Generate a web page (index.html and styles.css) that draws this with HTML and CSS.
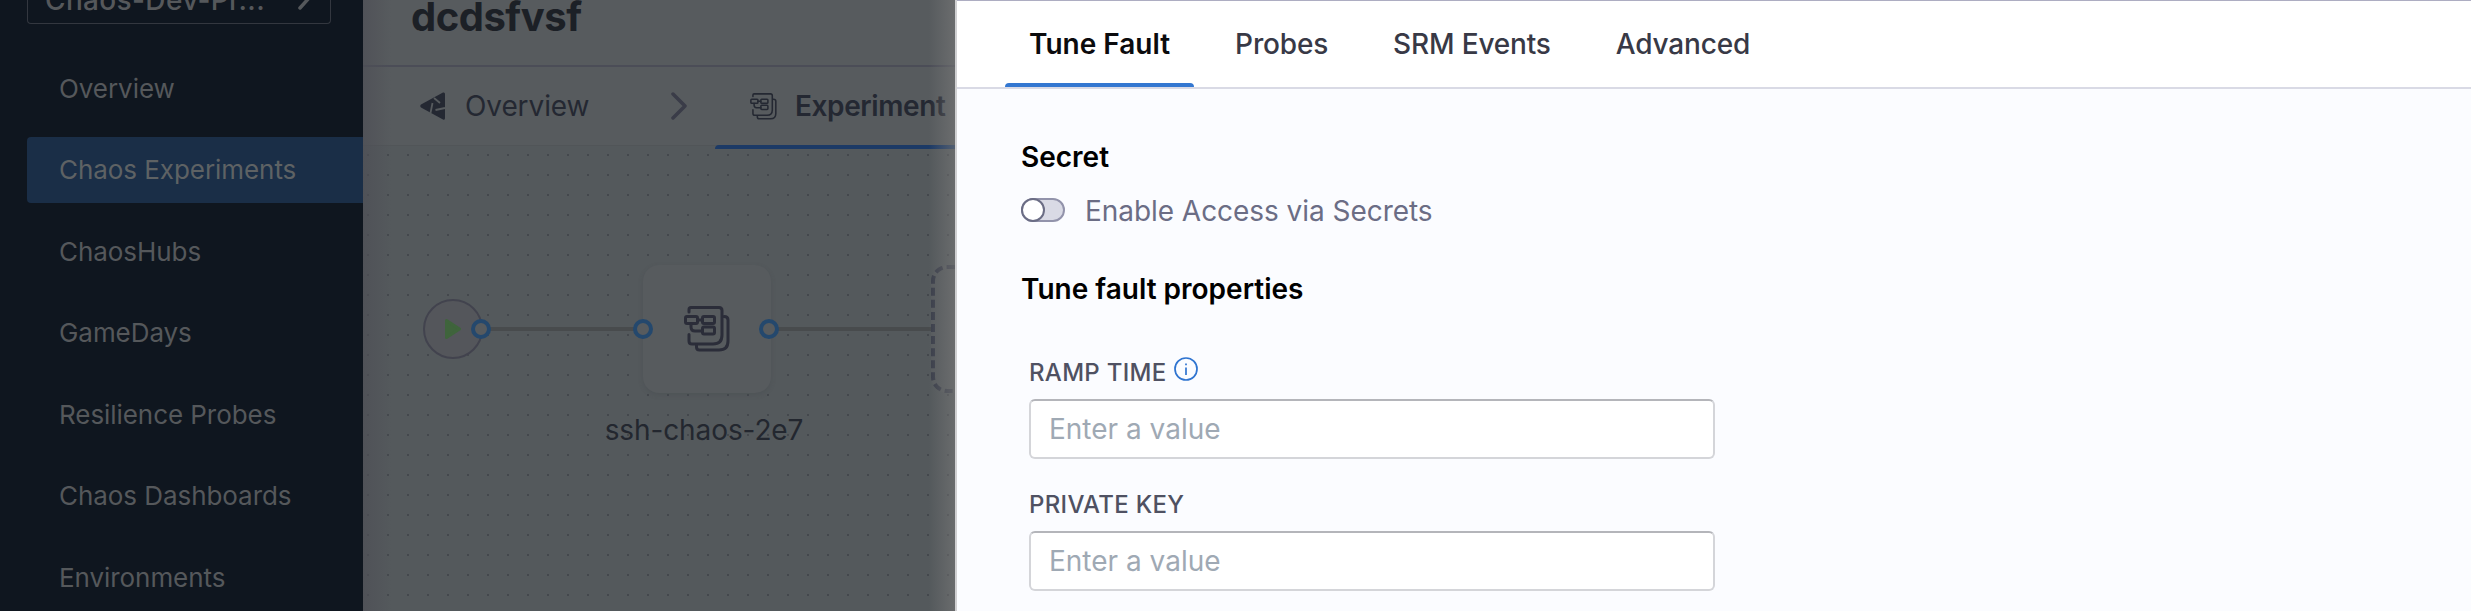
FILE: index.html
```
<!DOCTYPE html>
<html lang="en">
<head>
<meta charset="utf-8">
<title>Chaos Experiments</title>
<link rel="stylesheet" href="styles.css">
</head>
<body>
<svg class="defs" width="0" height="0">
  <symbol id="experiment" viewBox="0 0 46 46" fill="none" stroke="currentColor" stroke-linecap="round">
    <path d="M5 6V3.500Q5 1.500 7 1.500H35Q38 1.500 38 4.500V29Q38 38 29 38H8Q5 38 5 35V28.500"/>
    <path d="M40 10.500Q44 10.500 44 14V35Q44 44 35 44H15.500Q12.500 44 12.500 41V39"/>
    <rect x="1.500" y="10.500" width="12" height="7" rx="1.500"/>
    <rect x="18.500" y="10.500" width="12" height="7" rx="1.500"/>
    <rect x="18.500" y="21" width="12" height="7" rx="1.500"/>
    <path d="M13.500 14H18.500M7 18V21Q7 25 11 25H18.500"/>
  </symbol>
</svg>
<div class="app">
  <nav class="sidebar">
    <div class="project"><span>Chaos-Dev-Pr...</span>
      <svg class="project-arrow" width="14" height="24" viewBox="0 0 14 24"><path d="M2 2L11 12L2 22" fill="none" stroke="currentColor" stroke-width="3.500" stroke-linecap="round"/></svg>
    </div>
    <ul class="menu">
      <li>Overview</li>
      <li class="active">Chaos Experiments</li>
      <li>ChaosHubs</li>
      <li>GameDays</li>
      <li>Resilience Probes</li>
      <li>Chaos Dashboards</li>
      <li>Environments</li>
    </ul>
  </nav>
  <main class="studio">
    <header class="title">dcdsfvsf</header>
    <div class="steps">
      <div class="step step-overview">
        <svg width="26" height="28" viewBox="0 0 26 28"><path d="M1 12.500L23 .5Q25 0 25 2V26Q25 28.500 23 27.500L1 15.500Q-.5 14 1 12.500Z" fill="currentColor"/><path d="M12.500 11L10.500 21M14 6L20 11M15.500 18L25 16" stroke="#575b5e" stroke-width="1.800" fill="none"/></svg>
        <span>Overview</span>
      </div>
      <svg class="chevron" width="16" height="28" viewBox="0 0 16 28"><path d="M2 2L14 14L2 26" fill="none" stroke="currentColor" stroke-width="3.500" stroke-linecap="round" stroke-linejoin="round"/></svg>
      <div class="step step-experiment">
        <svg class="thin" width="27" height="27"><use href="#experiment"/></svg>
        <span>Experiment</span>
      </div>
    </div>
    <div class="canvas">
      <div class="edge edge-a"></div>
      <div class="edge edge-b"></div>
      <div class="start"><svg width="16" height="20" viewBox="0 0 16 20"><path d="M1.500 1.500L14.500 10L1.500 18.500Z" fill="#3f643c" stroke="#3f643c" stroke-width="3" stroke-linejoin="round"/></svg></div>
      <div class="node"><svg class="bold" width="46" height="46"><use href="#experiment"/></svg></div>
      <div class="node-label">ssh-chaos-2e7</div>
      <div class="add-node"></div>
      <i class="port port-a"></i><i class="port port-b"></i><i class="port port-c"></i>
    </div>
  </main>
  <section class="drawer">
    <div class="tabs">
      <div class="tab selected">Tune Fault</div>
      <div class="tab">Probes</div>
      <div class="tab">SRM Events</div>
      <div class="tab">Advanced</div>
    </div>
    <div class="panel">
      <h2>Secret</h2>
      <label class="toggle"><span class="switch"><span class="knob"></span></span><span>Enable Access via Secrets</span></label>
      <h2 class="properties">Tune fault properties</h2>
      <div class="field">
        <div class="label">RAMP TIME
          <svg width="24" height="24" viewBox="0 0 24 24" fill="none" stroke="#2f74d0"><circle cx="12" cy="12" r="11" stroke-width="1.700"/><path d="M12 10.500V18M12 6.500V8.300" stroke-width="1.700"/></svg>
        </div>
        <input class="input" placeholder="Enter a value">
      </div>
      <div class="field">
        <div class="label">PRIVATE KEY</div>
        <input class="input" placeholder="Enter a value">
      </div>
    </div>
  </section>
</div>
</body>
</html>
```
FILE: styles.css
```
* { box-sizing: border-box; }
body { margin: 0; font-family: Inter, "Liberation Sans", sans-serif; overflow: hidden; }
.defs { position: absolute; }
.app { display: flex; width: 2471px; height: 611px; overflow: hidden; }

.sidebar { width: 363px; flex: none; background: #0f161f; color: #55585b; padding-left: 27px; }
.project { display: flex; align-items: flex-end; justify-content: space-between; width: 304px; height: 24px; padding: 0 18px 0 17px; border: 1px solid #33373f; border-top: 0; border-radius: 0 0 4px 4px; font-size: 28px; font-weight: 500; letter-spacing: .35px; line-height: 34px; }
.project span { margin-bottom: 6px; }
.project-arrow { flex: none; margin-bottom: 13px; }
.menu { list-style: none; margin: 31.500px 0 0; padding: 0; display: flex; flex-direction: column; gap: 15.500px; }
.menu li { height: 66px; padding-left: 32px; line-height: 66px; font-size: 26px; letter-spacing: -.06px; border-radius: 4px 0 0 4px; }
.menu .active { background: #1a2e47; color: #5e6264; }

.studio { position: relative; display: flex; flex-direction: column; width: 592px; flex: none; background: #575b5e; color: #242832; overflow: hidden; }
.studio::before { content: ""; position: absolute; z-index: 2; left: 0; top: 0; bottom: 0; width: 28px; background: linear-gradient(90deg, rgba(78,79,86,.75), rgba(78,79,86,0)); }
.studio::after { content: ""; position: absolute; z-index: 2; right: 0; top: 0; bottom: 0; width: 26px; background: linear-gradient(90deg, rgba(120,120,120,0), rgba(120,120,120,.6)); }
.title { height: 67px; flex: none; padding-left: 48px; border-bottom: 2px solid #4b4d57; font-size: 40px; font-weight: 700; letter-spacing: -.5px; line-height: 34px; color: #1c2026; }
.steps { display: flex; height: 78px; flex: none; font-size: 28px; line-height: 78px; }
.step { display: flex; flex: none; align-items: center; }
.step-overview { width: 308px; padding-left: 57px; gap: 19px; letter-spacing: -.1px; }
.chevron { flex: none; align-self: center; color: #3a3c48; }
.step-experiment { position: relative; margin-left: 28px; width: 280px; padding-left: 35px; gap: 18px; font-weight: 600; letter-spacing: -.4px; }
.step-experiment::after { content: ""; position: absolute; z-index: 1; left: 0; right: 0; top: 78px; height: 4px; background: #1c3a66; border-radius: 4px 0 0 0; }
.thin { stroke-width: 2.600; }
.bold { stroke-width: 3; }

.canvas { position: relative; flex: 1; background-color: #54595c; background-image: radial-gradient(circle, #44484d 1.200px, transparent 1.400px); background-size: 20px 20px; background-position: -5px -1px; border-top: 1px solid #515558; }
.edge { position: absolute; top: 181px; height: 4px; background: #484b4d; }
.edge-a { left: 118px; width: 162px; }
.edge-b { left: 406px; width: 163px; }
.start { position: absolute; left: 60px; top: 153px; width: 60px; height: 60px; border: 2px solid #42434e; border-radius: 50%; background: #54565b; display: flex; align-items: center; padding-left: 20px; }
.start svg { flex: none; }
.node { position: absolute; left: 280px; top: 119px; width: 128px; height: 128px; border-radius: 16px; background: #575b5e; box-shadow: 0 2px 5px rgba(60,63,70,.22); display: flex; align-items: center; justify-content: center; color: #2b2d39; }
.node-label { position: absolute; left: 191px; top: 266px; width: 300px; text-align: center; font-size: 28px; letter-spacing: -.1px; line-height: 36px; color: #23272f; }
.add-node { position: absolute; left: 568px; top: 119px; width: 128px; height: 128px; border: 4px dashed #3b3f4b; border-radius: 16px; background: #575b5e; }
.port { position: absolute; top: 173px; width: 20px; height: 20px; border: 4px solid #24486d; border-radius: 50%; background: #575b5e; }
.port-a { left: 108px; }
.port-b { left: 270px; }
.port-c { left: 396px; }

.drawer { flex: 1; border-left: 2px solid #d0d0d2; background: #fbfcff; z-index: 3; }
.tabs { display: flex; height: 89px; padding-left: 48px; gap: 17px; background: #fff; border-top: 1px solid #adadc2; border-bottom: 2px solid #d9dae5; }
.tab { position: relative; padding: 0 24px; font-size: 28px; font-weight: 500; letter-spacing: -.17px; line-height: 86px; color: #383946; white-space: nowrap; }
.selected { font-weight: 600; letter-spacing: 0; color: #0b0b0d; }
.selected::after { content: ""; position: absolute; left: 0; right: 0; bottom: 0; height: 4px; background: #3377d1; border-radius: 4px 4px 0 0; }
.panel { padding: 50px 64px; }
h2 { margin: 0; font-size: 28px; font-weight: 600; line-height: 36px; color: #000; }
.toggle { display: flex; align-items: center; gap: 20px; margin-top: 17px; font-size: 28px; letter-spacing: -.05px; line-height: 38px; color: #6b6d85; }
.switch { width: 44px; height: 24px; margin-bottom: 2px; border: 2px solid #9293ab; border-radius: 12px; background: #d9dae5; }
.knob { display: block; width: 24px; height: 24px; margin: -2px; border: 2px solid #6b6d85; border-radius: 50%; background: #fff; }
.properties { margin-top: 41px; }
.field { width: 686px; margin: 46px 0 0 8px; }
.field + .field { margin-top: 26px; }
.label { display: flex; gap: 7px; height: 46px; font-size: 24px; font-weight: 500; letter-spacing: .3px; line-height: 40px; color: #4f5162; }
.label svg { margin-top: 4px; }
.input { display: block; width: 686px; height: 60px; margin-top: 0; padding: 0 18px; border: 2px solid #d4d5d9; border-top-color: #b4b5ba; border-radius: 6px; background: #fff; font: 28px/36px Inter, sans-serif; }
.input::placeholder { color: #9fa9b4; opacity: 1; }
```
